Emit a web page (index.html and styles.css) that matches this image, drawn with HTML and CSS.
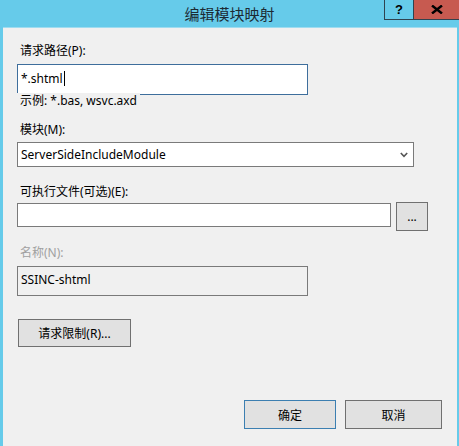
FILE: index.html
```html
<!DOCTYPE html>
<html>
<head>
  <meta charset="utf-8">
  <link rel="stylesheet" href="styles.css">
</head>
<body>
  <div class="window">
    <div class="titlebar">
      <div class="title">编辑模块映射</div>
      <div class="caption-buttons">
        <button class="cap-btn help">?</button>
        <button class="cap-btn close">
          <svg viewBox="0 0 12 9">
            <path d="M1,0.5 L11,8.5 M11,0.5 L1,8.5"/>
          </svg>
        </button>
      </div>
    </div>

    <div class="panel">
      <label class="field-label first">请求路径(P):</label>
      <div class="textbox focused path-box">*.shtml<span class="caret"></span></div>
      <div class="hint">示例: *.bas, wsvc.axd</div>

      <label class="field-label module-label">模块(M):</label>
      <div class="select">
        <span>ServerSideIncludeModule</span>
        <svg viewBox="0 0 8 6">
          <path d="M0.8,1 L4,4.3 L7.2,1"/>
        </svg>
      </div>

      <label class="field-label exe-label">可执行文件(可选)(E):</label>
      <div class="exe-row">
        <div class="textbox exe-box"></div>
        <button class="btn browse">...</button>
      </div>

      <label class="field-label disabled name-label">名称(N):</label>
      <div class="textbox readonly name-box">SSINC-shtml</div>

      <button class="btn limits">请求限制(R)...</button>

      <div class="footer">
        <button class="btn default ok">确定</button>
        <button class="btn cancel">取消</button>
      </div>
    </div>
  </div>
</body>
</html>
```

FILE: styles.css
```css
html, body {
  margin: 0;
  padding: 0;
}

body {
  width: 459px;
  height: 446px;
  overflow: hidden;
  background: #66cbea;
  font-family: "Noto Sans", "Noto Sans CJK SC", sans-serif;
  font-size: 12px;
  color: #000;
}

.window {
  display: flex;
  flex-direction: column;
  height: 446px;
}

.titlebar {
  position: relative;
  height: 27px;
  display: flex;
  align-items: center;
  justify-content: center;
}

.title {
  font-family: "Noto Sans CJK SC", sans-serif;
  font-size: 15px;
  color: #1c2a33;
  margin-top: -1px;
}

.caption-buttons {
  position: absolute;
  top: 0;
  right: 0;
  display: flex;
}

.cap-btn {
  height: 20px;
  margin: 0;
  padding: 0;
  border: 1px solid #2f4350;
  border-top: none;
  display: flex;
  align-items: center;
  justify-content: center;
  font-family: "Liberation Sans", sans-serif;
  font-weight: bold;
  font-size: 13px;
  color: #000;
}

.cap-btn.help {
  width: 29px;
  background: #66cbea;
  border-right: none;
}

.cap-btn.close {
  width: 46px;
  background: #c75a50;
  border-right: none;
  border-left: 1px solid #2f4350;
}

.cap-btn svg {
  width: 12px;
  height: 9px;
  stroke: #000;
  stroke-width: 2.4;
  fill: none;
}

.panel {
  flex: 1;
  margin: 0 2px 0 3px;
  padding: 0 15px 0 14px;
  background: #f0f0f0;
  border-top: 1px solid #9fdcf0;
  display: flex;
  flex-direction: column;
  align-items: flex-start;
}

.field-label {
  display: block;
  line-height: 16px;
  padding-left: 3px;
}

.field-label.first {
  margin-top: 15px;
}

.field-label.disabled {
  color: #a0a0a0;
}

.textbox {
  box-sizing: border-box;
  background: #fff;
  border: 1px solid #7a7a7a;
  padding: 0 3px;
  display: flex;
  align-items: center;
}

.textbox.focused {
  border-color: #3e6e9c;
}

.path-box {
  margin-top: 5px;
  width: 291px;
  height: 31px;
  padding-bottom: 3px;
}

.caret {
  display: inline-block;
  width: 1px;
  height: 15px;
  background: #000;
  margin-left: 1px;
}

.hint {
  position: relative;
  margin-top: -2px;
  padding: 0 3px;
  line-height: 16px;
  background: #f0f0f0;
}

.module-label {
  margin-top: 13px;
}

.select {
  box-sizing: border-box;
  margin-top: 4px;
  width: 397px;
  height: 25px;
  background: #fff;
  border: 1px solid #7a7a7a;
  padding: 0 5px 0 3px;
  display: flex;
  align-items: center;
  justify-content: space-between;
}

.select svg {
  width: 8px;
  height: 6px;
  stroke: #555;
  stroke-width: 1.6;
  fill: none;
}

.exe-label {
  margin-top: 17px;
}

.exe-row {
  margin-top: 2px;
  display: flex;
  align-items: flex-start;
  gap: 5px;
}

.exe-box {
  margin-top: 1px;
  width: 374px;
  height: 24px;
}

.btn {
  box-sizing: border-box;
  margin: 0;
  padding: 0;
  background: #e1e1e1;
  border: 1px solid #707070;
  font-family: "Noto Sans", "Noto Sans CJK SC", sans-serif;
  font-size: 12px;
  color: #000;
  display: flex;
  align-items: center;
  justify-content: center;
}

.browse {
  width: 32px;
  height: 29px;
}

.name-label {
  margin-top: 14px;
}

.name-box {
  margin-top: 5px;
  width: 291px;
  height: 30px;
  background: #f0f0f0;
  align-items: flex-start;
  padding-top: 4px;
}

.limits {
  margin-top: 23px;
  margin-left: 1px;
  width: 113px;
  height: 28px;
}

.footer {
  margin-top: 53px;
  align-self: stretch;
  display: flex;
  justify-content: flex-end;
  gap: 9px;
}

.ok {
  width: 92px;
  height: 29px;
  border-color: #3c7fb1;
}

.cancel {
  width: 97px;
  height: 29px;
}
```
